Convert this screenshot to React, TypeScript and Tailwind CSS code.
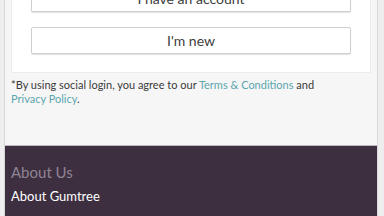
export default function App() {
  const font = { fontFamily: 'Lato, "Noto Sans", sans-serif' };
  return (
    <div className="w-[384px] h-[216px] overflow-hidden bg-[#ededed] flex" style={font}>
      <div className="w-[5px] shrink-0 bg-[#eeeeee] border-r border-[#d6d6d6]" />
      <div className="w-[373px] shrink-0 flex flex-col bg-[#f6f6f6] border-r border-[#d9d9d9]">
        <div className="px-[6px]">
          <div className="bg-white border-x border-b border-[#ececec] px-[19px] pb-[18px] flex flex-col gap-[15px] mt-[-15px]">
            <button className="h-[27px] w-full rounded-[2px] border border-[#cfcfcf] shadow-[0_1px_1px_rgba(0,0,0,0.12)] text-[14px] text-[#3c3c3c] bg-white">
              I have an account
            </button>
            <button className="h-[27px] w-full rounded-[2px] border border-[#cfcfcf] shadow-[0_1px_1px_rgba(0,0,0,0.12)] text-[14px] text-[#3c3c3c] bg-white">
              I&apos;m new
            </button>
          </div>
        </div>
        <p className="px-[6px] pt-[5px] text-[11px] leading-[14px] text-[#3a3a3a]">
          *By using social login, you agree to our{' '}
          <span className="text-[#5aa6ae]">Terms &amp; Conditions</span> and
          <br />
          <span className="text-[#5aa6ae]">Privacy Policy</span>.
        </p>
        <div className="flex-1" />
        <div className="h-[71px] bg-[#3d2f40] border-t border-[#bdb7bf] px-[6px] pt-[17px]">
          <div className="text-[15px] leading-[18px] text-[#8f8494]">About Us</div>
          <div className="mt-[7px] text-[13px] leading-[16px] text-white">About Gumtree</div>
          <div className="mt-[9px] text-[13px] leading-[16px] text-white">Accessibility Statement</div>
        </div>
      </div>
      <div className="flex-1 bg-[#eeeeee]" />
    </div>
  );
}
